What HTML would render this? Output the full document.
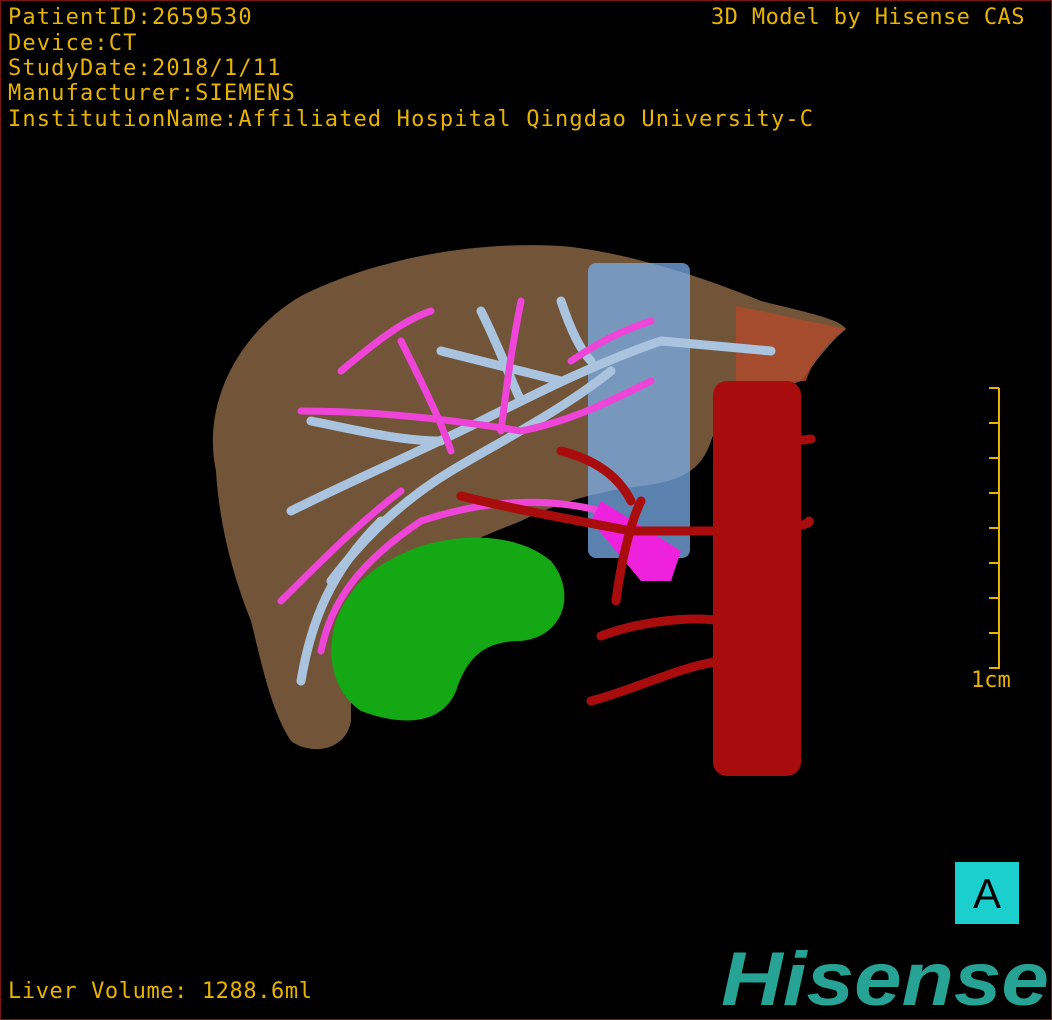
<!DOCTYPE html>
<html><head><style>
body{margin:0;background:#000;}
#c{position:relative;width:1050px;height:1018px;border:1px solid #7a1515;overflow:hidden;background:#000;}
.t{position:absolute;left:7px;color:#e8b400;font:22px "DejaVu Sans Mono","Liberation Mono",monospace;letter-spacing:1.15px;white-space:pre;line-height:25px;}
</style></head><body><div id="c">
<svg width="1050" height="1018" style="position:absolute;left:0;top:0">
<path d="M215,470 C200,400 240,330 300,295 C380,255 480,240 560,245 C620,250 700,275 760,300 C800,310 840,318 845,328 C830,340 815,360 800,380 C760,395 720,410 710,440 C700,470 680,480 640,485 C600,490 560,500 520,520 C470,540 420,560 380,600 C350,640 350,690 350,720 C345,750 310,755 290,740 C270,710 260,660 250,620 C230,570 218,520 215,470 Z" fill="#7e5e3e" opacity="0.9"/>
<path d="M735,305 L845,328 C820,345 810,365 805,380 L735,380 Z" fill="#b04a2a" opacity="0.8"/>
<rect x="587" y="262" width="102" height="295" fill="#7aaee8" opacity="0.75" rx="8"/>
<path d="M335,620 C350,580 380,560 420,545 C470,530 520,535 550,560 C575,590 565,635 520,640 C480,640 465,660 455,690 C440,725 400,725 360,710 C330,690 325,650 335,620 Z" fill="#14a814"/>
<g stroke="#aac4e0" stroke-width="9" fill="none" stroke-linecap="round">
<path d="M290,510 C350,480 420,450 480,420 C540,390 600,360 660,340 L770,350"/>
<path d="M330,580 C360,540 400,500 450,470 C500,440 560,410 610,370"/>
<path d="M300,680 C310,620 330,570 380,520"/>
<path d="M480,310 C500,350 510,380 520,400"/>
<path d="M560,300 C570,330 580,350 590,360"/>
<path d="M440,350 C480,360 520,370 560,380"/>
<path d="M310,420 C360,430 400,440 440,440"/>
</g>
<g stroke="#ee44d8" stroke-width="7" fill="none" stroke-linecap="round">
<path d="M300,410 C380,410 460,420 520,430 C570,420 610,400 650,380"/>
<path d="M320,650 C330,600 360,560 420,520 C480,500 540,495 600,510 L670,560"/>
<path d="M400,340 C420,380 440,420 450,450"/>
<path d="M520,300 C510,350 505,390 500,430"/>
<path d="M280,600 C320,560 360,520 400,490"/>
<path d="M430,310 C400,320 370,345 340,370"/>
<path d="M570,360 C600,340 620,330 650,320"/>
</g>
<path d="M600,500 L680,550 L670,580 L640,580 L590,520 Z" fill="#ee22dd"/>
<rect x="712" y="380" width="88" height="395" fill="#a80c0c" rx="14"/>
<g stroke="#a80c0c" stroke-width="9" fill="none" stroke-linecap="round">
<path d="M600,635 C640,620 690,615 720,620"/>
<path d="M590,700 C630,690 680,665 720,660"/>
<path d="M615,600 C620,560 630,520 640,500"/>
<path d="M460,495 C520,510 580,520 630,530 L720,530"/>
<path d="M560,450 C600,460 620,480 630,500"/>
<path d="M790,525 C800,525 810,522 808,520"/>
<path d="M760,430 C780,440 800,440 810,438"/>
</g>
<ellipse cx="752" cy="540" rx="22" ry="18" fill="#a80c0c"/>
<g stroke="#e8b400" stroke-width="2">
<line x1="998" y1="387" x2="998" y2="668"/>
<line x1="988" y1="387" x2="998" y2="387"/><line x1="988" y1="422" x2="998" y2="422"/><line x1="988" y1="457" x2="998" y2="457"/><line x1="988" y1="492" x2="998" y2="492"/><line x1="988" y1="527" x2="998" y2="527"/><line x1="988" y1="562" x2="998" y2="562"/><line x1="988" y1="597" x2="998" y2="597"/><line x1="988" y1="632" x2="998" y2="632"/><line x1="988" y1="667" x2="998" y2="667"/>
</g>
<rect x="954" y="861" width="64" height="62" fill="#1ccfcf"/>
<text x="986" y="907" text-anchor="middle" font-family="Liberation Sans,sans-serif" font-size="42" fill="#000">A</text>
<text x="720" y="1004" textLength="328" lengthAdjust="spacingAndGlyphs" font-family="Liberation Sans,sans-serif" font-weight="bold" font-style="italic" font-size="76" fill="#26a394">Hisense</text>
</svg>
<div class="t" style="top:4px">PatientID:2659530</div>
<div class="t" style="top:30px">Device:CT</div>
<div class="t" style="top:55px">StudyDate:2018/1/11</div>
<div class="t" style="top:80px">Manufacturer:SIEMENS</div>
<div class="t" style="top:106px">InstitutionName:Affiliated Hospital Qingdao University-C</div>
<div class="t" style="top:4px;left:710px;letter-spacing:0.4px">3D Model by Hisense CAS</div>
<div class="t" style="top:978px;letter-spacing:0.6px">Liver Volume: 1288.6ml</div>
<div class="t" style="top:667px;left:970px;letter-spacing:0">1cm</div>
</div></body></html>
